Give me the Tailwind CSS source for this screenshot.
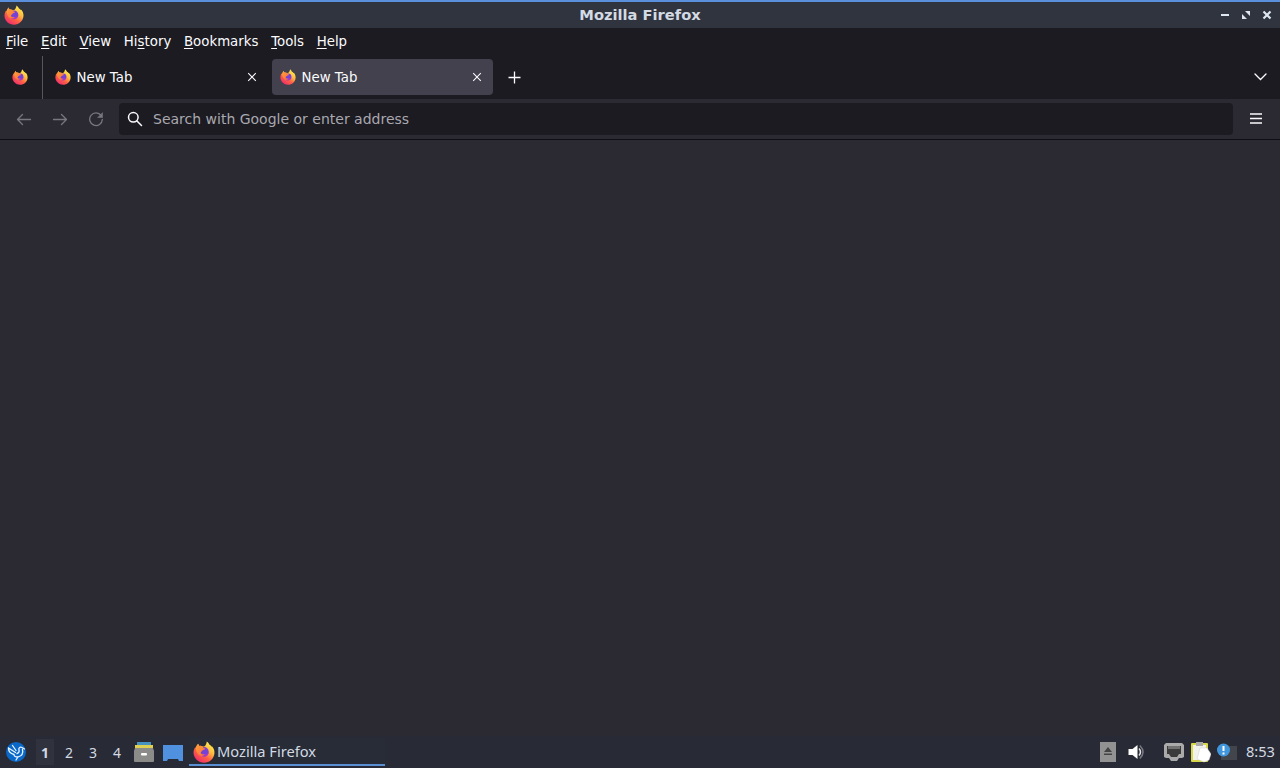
<!DOCTYPE html>
<html lang="en">
<head>
    <meta charset="UTF-8">
    <meta name="viewport" content="width=device-width, initial-scale=1.0">
    <title>Mozilla Firefox</title>
    <script src="https://cdn.jsdelivr.net/npm/@tailwindcss/browser@4"></script>
</head>
<body class="w-[1280px] h-[768px] overflow-hidden flex flex-col bg-[#2b2a33] text-[#fbfbfe] font-['DejaVu_Sans',sans-serif] text-[13.33px]">
    <!-- shared logo -->
    <svg class="absolute size-0">
        <defs>
            <linearGradient id="flame" x1="0.85" y1="0.1" x2="0.25" y2="0.95">
                <stop offset="0" stop-color="#fff04f"></stop>
                <stop offset="0.35" stop-color="#ffb840"></stop>
                <stop offset="0.65" stop-color="#ff6044"></stop>
                <stop offset="1" stop-color="#f0306c"></stop>
            </linearGradient>
            <linearGradient id="fox" x1="0" y1="0" x2="1" y2="1">
                <stop offset="0" stop-color="#ffa436"></stop>
                <stop offset="1" stop-color="#ff6a3a"></stop>
            </linearGradient>
            <symbol id="firefox" viewBox="0 0 20 20">
                <path fill="url(#flame)" d="M12.600.400c1.100.900 2 2 2.400 3.100.900.400 1.500 1 2 1.700l.200-.500c1.600 1.500 2.400 3.800 2.300 6.100-.200 5-4.400 8.900-9.500 8.900S.500 15.700.500 10.700c0-2.200.700-4 1.700-5.300l.300 1C3 4.500 3.800 3.200 4.900 2.400c0 .800.200 1.500.700 2.100 1.200-.200 2.300 0 3.300.600 1.200.100 2-.400 2.500-1.300.600-1 .900-2.200 1.200-3.400z"></path>
                <circle cx="10" cy="9.800" r="4.300" fill="#7542d8"></circle>
                <path fill="#a53bcb" d="M7 13c1.800 1.500 4.300 1.600 6 .100.700-.700 1.200-1.700 1.200-2.800-1.200 1.400-2.200 1.900-3.800 1.700z"></path>
                <path fill="url(#fox)" d="M2.500 6.400C3 4.500 3.800 3.200 4.900 2.400c0 .800.200 1.500.700 2.100 1.200-.200 2.300 0 3.300.700.400.400.600.800.700 1.200l1.600.400c-.200.900-1 1.100-2.200 1.400-.200.900-1.300 1.100-1.800 1.900-.400 1 .100 1.700 1 1.900 1.100.200 1.700-.200 2.400 0-1 1.500-2.900 1.900-4.600 1.200C4.500 12.500 2.800 9.500 2.500 6.400z"></path>
            </symbol>
        </defs>
    </svg>

    <!-- window title bar -->
    <header class="relative h-7 shrink-0 flex items-center justify-between bg-[#2f343f] border-t-2 border-[#5a8fdc] pl-1 pr-2">
        <svg class="size-5"><use href="#firefox"></use></svg>
        <h1 class="absolute inset-x-0 text-center font-bold text-[14.67px] leading-6 text-[#d3dae3]">Mozilla Firefox</h1>
        <div class="flex items-center gap-[11px] text-[#dfe6ef]">
            <svg class="size-2.5" viewBox="0 0 10 10"><path d="M1 5h8" stroke="currentColor" stroke-width="2"></path></svg>
            <svg class="size-2.5" viewBox="0 0 10 10" fill="currentColor"><path d="M4 1h5v5zM1 4v5h5z"></path></svg>
            <svg class="size-2.5" viewBox="0 0 10 10"><path d="M1.500 1.500l7 7M8.500 1.500l-7 7" stroke="currentColor" stroke-width="2.200"></path></svg>
        </div>
    </header>

    <!-- menu bar -->
    <nav class="h-7 shrink-0 flex items-center gap-[12.7px] px-1.5 bg-[#1c1b22]">
        <span><u class="underline-offset-2">F</u>ile</span>
        <span><u class="underline-offset-2">E</u>dit</span>
        <span><u class="underline-offset-2">V</u>iew</span>
        <span>Hi<u class="underline-offset-2">s</u>tory</span>
        <span><u class="underline-offset-2">B</u>ookmarks</span>
        <span><u class="underline-offset-2">T</u>ools</span>
        <span><u class="underline-offset-2">H</u>elp</span>
    </nav>

    <!-- tabs -->
    <div class="h-[43px] shrink-0 flex items-center bg-[#1c1b22]">
        <div class="w-[43px] h-full pl-3 pb-0.5 flex items-center border-r border-[#57565e]">
            <svg class="size-4"><use href="#firefox"></use></svg>
        </div>
        <div class="w-[229px] flex items-center pl-3 pr-[15px]">
            <svg class="size-4"><use href="#firefox"></use></svg>
            <span class="ml-[5.5px] flex-1">New Tab</span>
            <svg class="size-2.5" viewBox="0 0 10 10"><path d="M1.200 1.200l7.600 7.600M8.800 1.200l-7.600 7.600" stroke="currentColor" stroke-width="1.100"></path></svg>
        </div>
        <div class="w-[221px] h-9 -mt-px flex items-center pl-2 pr-[11px] rounded bg-[#42414d]">
            <svg class="size-4"><use href="#firefox"></use></svg>
            <span class="ml-[5.5px] pt-0.5 flex-1">New Tab</span>
            <svg class="size-2.5" viewBox="0 0 10 10"><path d="M1.200 1.200l7.600 7.600M8.800 1.200l-7.600 7.600" stroke="currentColor" stroke-width="1.100"></path></svg>
        </div>
        <svg class="ml-[15px] size-[13px]" viewBox="0 0 13 13"><path d="M6.500.5v12M.5 6.500h12" stroke="currentColor" stroke-width="1.300"></path></svg>
        <svg class="ml-auto mr-[13px] -mt-0.5 w-[13px] h-2" viewBox="0 0 13 8"><path d="M1 1l5.500 5.500L12 1" fill="none" stroke="currentColor" stroke-width="1.300" stroke-linecap="round"></path></svg>
    </div>

    <!-- toolbar -->
    <div class="h-[41px] shrink-0 flex items-center bg-[#2b2a33] border-b border-[#0f0e14] pl-4">
        <div class="w-[103px] flex gap-5 text-[#78777f]">
            <svg class="size-4" viewBox="0 0 16 16" fill="none" stroke="currentColor" stroke-width="1.300" stroke-linecap="round" stroke-linejoin="round"><path d="M14.500 8.500H1.500M6.500 3.500l-5 5 5 5"></path></svg>
            <svg class="size-4" viewBox="0 0 16 16" fill="none" stroke="currentColor" stroke-width="1.300" stroke-linecap="round" stroke-linejoin="round"><path d="M1.500 8.500h13M9.500 3.500l5 5-5 5"></path></svg>
            <svg class="size-4" viewBox="0 0 16 16" fill="none" stroke="currentColor" stroke-width="1.300" stroke-linecap="round" stroke-linejoin="round"><path d="M13.200 4.700A6.300 6.300 0 1 0 14.300 8.500"></path><path d="M14.500 2v4.500H10z" fill="currentColor" stroke-width=".6"></path></svg>
        </div>
        <div class="w-[1114px] h-8 flex items-center gap-2.5 pl-2 rounded bg-[#1c1b22]">
            <svg class="size-4" viewBox="0 0 16 16" fill="none" stroke="currentColor" stroke-width="1.500" stroke-linecap="round"><circle cx="6.300" cy="6.300" r="4.800"></circle><path d="M10 10l4.500 4.500"></path></svg>
            <span class="text-sm text-[#a9a8af]">Search with Google or enter address</span>
        </div>
        <svg class="ml-[17px] -mt-px w-3 h-[11px]" viewBox="0 0 12 11"><path d="M0 1h12M0 5.500h12M0 10h12" stroke="currentColor" stroke-width="1.300"></path></svg>
    </div>

    <main class="flex-1 bg-[#2b2a33]"></main>

    <!-- panel -->
    <footer class="h-8 shrink-0 flex items-center bg-[#282a35] text-[#d3dae3] font-['Noto_Sans',sans-serif] text-sm">
        <svg class="ml-1.5 size-5" viewBox="0 0 20 20">
            <circle cx="10" cy="10" r="10" fill="#0a68c8"></circle>
            <path d="M6.500 3.500l3.500 5M2.500 6l7 4.500M2.500 6q0 5 5.500 6.500M18.500 7L16 5.500c-2-1-3.700.5-3 2.500.500 2 0 3-2 3.500M16.500 7.500c1 4-1 6.500-4.500 7.500l-2 3M8 12.500q0 2.500 4 2.500" fill="none" stroke="#e8f4ff" stroke-width="1.300" stroke-linecap="round" stroke-linejoin="round"></path>
        </svg>
        <div class="ml-2.5 w-[18px] h-[26px] pt-px flex items-center justify-center bg-[#30333e] font-bold">1</div>
        <div class="w-6 ml-[3px] pt-px text-center">2</div>
        <div class="w-6 pt-px text-center">3</div>
        <div class="w-6 pt-px text-center">4</div>
        <svg class="ml-[5px] w-5 h-5" viewBox="0 0 20 20">
            <path d="M3 0h14v4H3z" fill="#4693bd"></path>
            <path d="M1 3h18v4H1z" fill="#e0d052"></path>
            <path d="M1 6h18l1 3v10q0 1-1 1H1q-1 0-1-1V9z" fill="#8b8b89"></path>
            <rect x="7" y="11" width="6" height="2.500" rx="1" fill="#fff"></rect>
        </svg>
        <svg class="ml-[9px] mt-0.5 w-5 h-4" viewBox="0 0 20 16"><path d="M0 0h20v16h-4l-1-2H5l-1 2H0z" fill="#4f91df"></path></svg>
        <div class="ml-1.5 w-[196px] h-7 flex items-center gap-0.5 pl-1 pt-0.5 border-b-2 border-[#5a8fd4] bg-[#272c37] text-[14.67px]">
            <svg class="size-[22px]"><use href="#firefox"></use></svg>
            <span class="pb-0.5">Mozilla Firefox</span>
        </div>

        <div class="ml-auto flex items-center pr-[5px]">
            <svg class="w-4 h-5" viewBox="0 0 16 20"><path d="M0 0h16v20H0z" fill="#929292"></path><path d="M8 5l4 5H4zM4 11.500h8v1.500H4z" fill="#444"></path></svg>
            <svg class="ml-3 w-4 h-4" viewBox="0 0 16 16">
                <path d="M.5 5h4l5-4v14l-5-4h-4z" fill="#fff"></path>
                <path d="M11 4.500q3 3.500 0 7" fill="none" stroke="#e4e4e8" stroke-width="1.500"></path>
                <path d="M11.800 1.500q6.500 6.500 0 13" fill="none" stroke="#777982" stroke-width="1.500"></path>
            </svg>
            <svg class="ml-5 w-5 h-[18px]" viewBox="0 0 20 18">
                <path d="M2 0h16l2 2v12l-2 1h-3l-2 3H7l-2-3H2l-2-1V2z" fill="#aaa"></path>
                <path d="M3 3h14v8h-2l-2 3H7l-2-3H3z" fill="#3b3b3b"></path>
                <path d="M5 3v3M7 3v3M9 3v3M11 3v3M13 3v3M15 3v3" stroke="#aaa"></path>
            </svg>
            <svg class="ml-[7px] w-5 h-[22px]" viewBox="0 0 20 22">
                <rect y="2" width="17" height="19" rx="1" fill="#d9d84a"></rect>
                <path d="M2 4h13v15H2z" fill="#f2f2ed"></path>
                <path d="M5 1h7v4H5z" fill="#aaa"></path>
                <path d="M9 7h7l4 6-2 6-5 2-7-3z" fill="#fff" stroke="#cfcfcf" stroke-width=".5"></path>
            </svg>
            <svg class="ml-1.5 w-5 h-[18px]" viewBox="0 0 20 18">
                <path d="M4 3h16v14H4z" fill="#42454c"></path>
                <circle cx="6.500" cy="7" r="6.500" fill="#4197dd"></circle>
                <path d="M6.500 3v5M6.500 9.500v2" stroke="#fff" stroke-width="2"></path>
            </svg>
            <span class="ml-[9px] pb-0.5 text-[14.67px]">8:53</span>
        </div>
    </footer>
</body>
</html>
